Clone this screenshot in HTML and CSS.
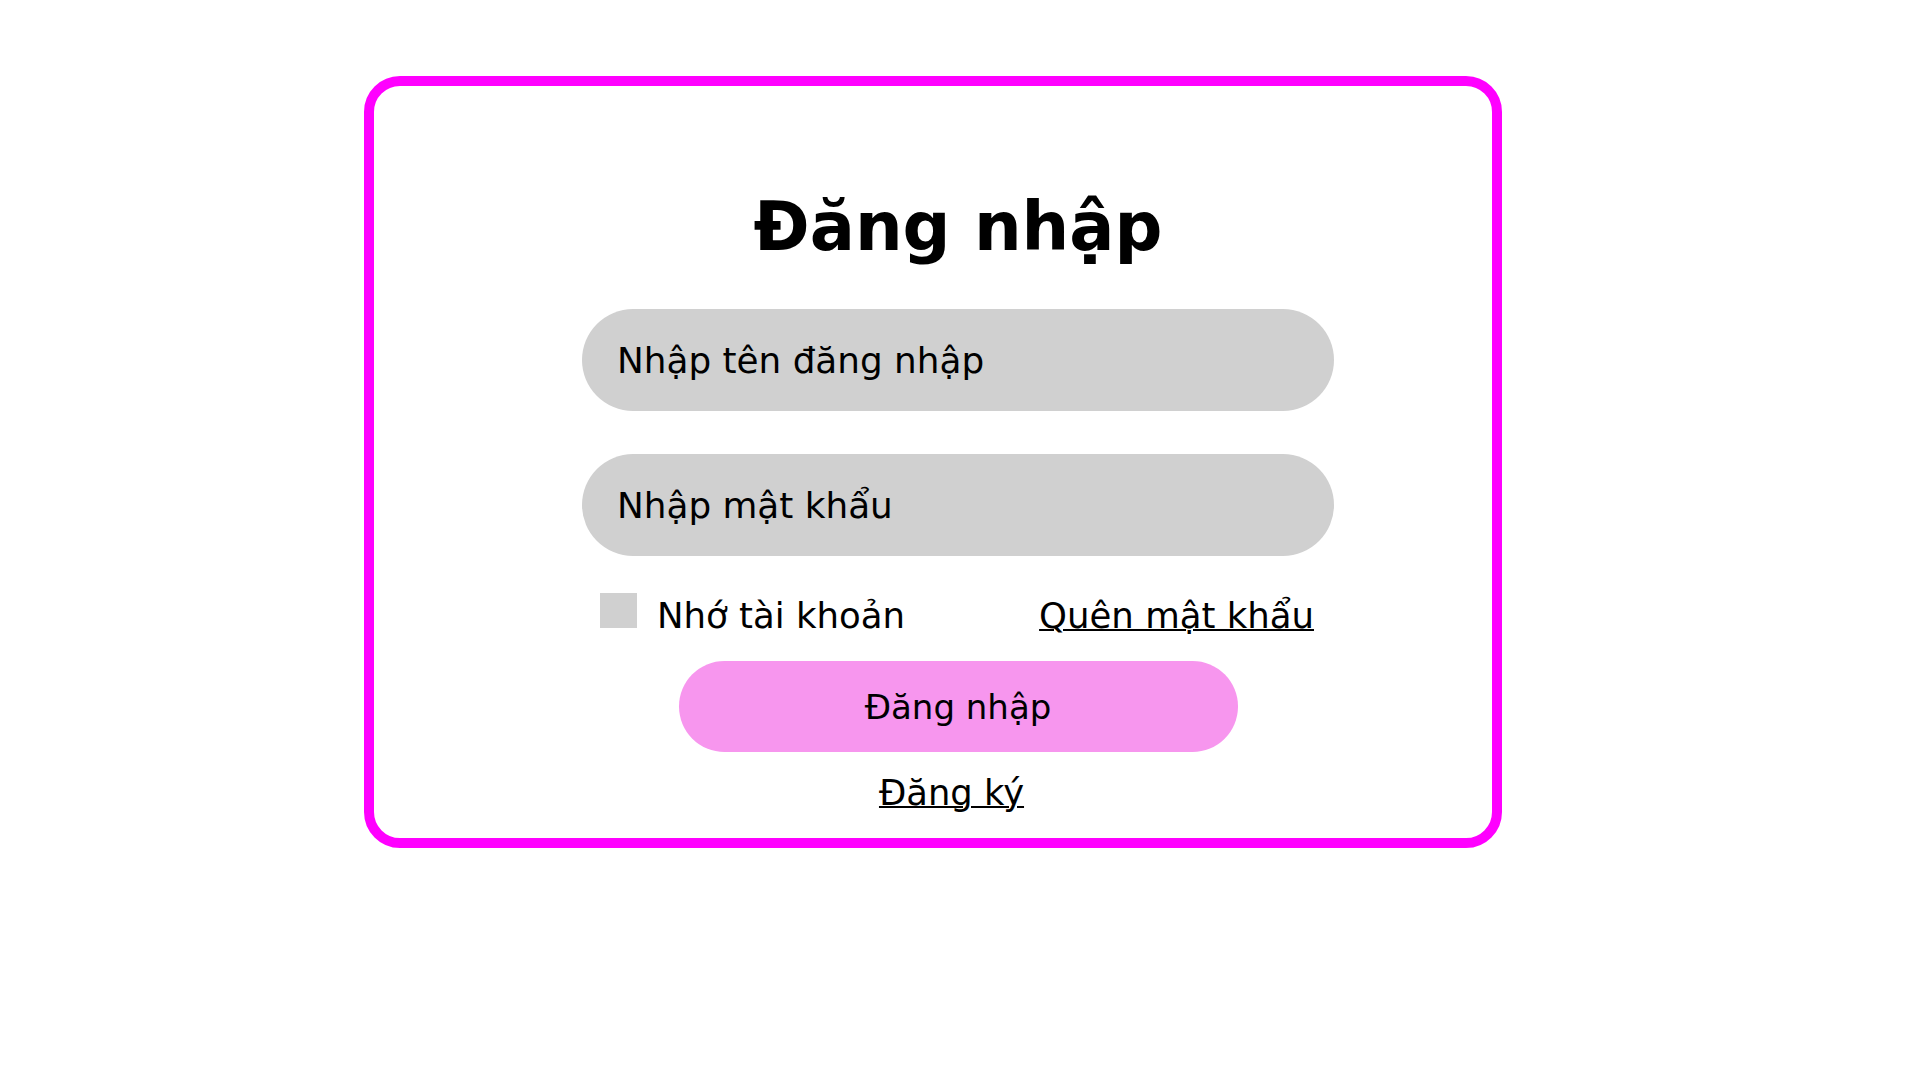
FILE: index.html
```html
<!DOCTYPE html>
<html lang="vi">
<head>
<meta charset="utf-8">
<title>Đăng nhập</title>
<link rel="stylesheet" href="styles.css">
</head>
<body>
<main class="card">
  <h1 class="title">Đăng nhập</h1>
  <form class="form">
    <input class="field" type="text" placeholder="Nhập tên đăng nhập">
    <input class="field" type="password" placeholder="Nhập mật khẩu">
    <div class="options">
      <label class="remember"><span class="box"></span><span class="remember-text">Nhớ tài khoản</span></label>
      <a class="forgot" href="#">Quên mật khẩu</a>
    </div>
    <button class="submit" type="button">Đăng nhập</button>
    <a class="register" href="#">Đăng ký</a>
  </form>
</main>
</body>
</html>
```

FILE: styles.css
```css
html, body {
  margin: 0;
  padding: 0;
  background: #ffffff;
}

body {
  font-family: "DejaVu Sans", "Liberation Sans", sans-serif;
  color: #000;
}

.card {
  box-sizing: border-box;
  width: 1138px;
  height: 772px;
  margin: 76px 0 0 364px;
  border: 10px solid #ff00ff;
  border-radius: 36px;
  padding: 108px 158px 0 208px;
  display: flex;
  flex-direction: column;
  align-items: center;
}

.title {
  margin: 0;
  font-size: 67px;
  font-weight: 700;
  line-height: 66px;
}

.form {
  width: 752px;
  margin-top: 49px;
  display: flex;
  flex-direction: column;
  align-items: center;
}

.field {
  box-sizing: border-box;
  width: 752px;
  height: 102px;
  border: none;
  outline: none;
  border-radius: 51px;
  background: #d0d0d0;
  padding: 0 0 0 35px;
  font-family: inherit;
  font-size: 35.8px;
  color: #000;
}

.field + .field {
  margin-top: 43px;
}

.field::placeholder {
  color: #000;
  opacity: 1;
}

.options {
  box-sizing: border-box;
  width: 100%;
  margin-top: 37px;
  padding: 0 20px 0 18px;
  display: flex;
  justify-content: space-between;
  align-items: center;
  font-size: 35.5px;
  line-height: 35px;
}

.remember {
  display: flex;
  align-items: center;
}

.box {
  width: 37px;
  height: 35px;
  background: #d0d0d0;
  margin-right: 20px;
  margin-bottom: 5px;
}

.remember-text,
.forgot {
  padding-top: 5px;
}

.forgot {
  color: #000;
  text-decoration: underline;
  text-decoration-thickness: 2px;
}

.submit {
  box-sizing: border-box;
  width: 559px;
  height: 91px;
  margin-top: 28px;
  border: none;
  border-radius: 46px;
  background: #f796ee;
  font-family: inherit;
  font-size: 34px;
  color: #000;
  padding: 0;
}

.register {
  margin-top: 23px;
  margin-right: 13px;
  font-size: 35.3px;
  line-height: 35px;
  color: #000;
  text-decoration: underline;
  text-decoration-thickness: 2px;
}
```
